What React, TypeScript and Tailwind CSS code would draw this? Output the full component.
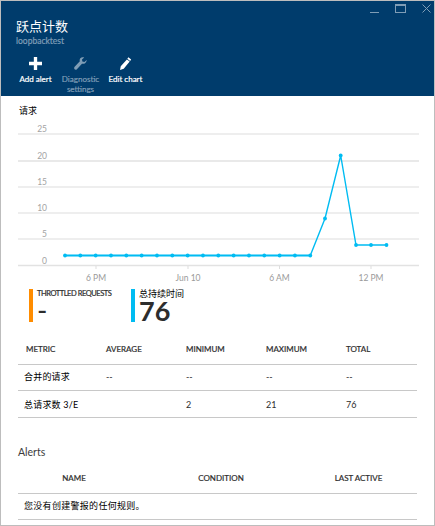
const font = { fontFamily: 'Lato, "Noto Sans CJK SC", sans-serif' };

const pts: [number, number][] = [
  ...Array.from({ length: 17 }, (_, i) => [65 + i * 15.33, 255.5] as [number, number]),
  [325, 218.5],
  [340.7, 155.5],
  [356, 245],
  [371, 245],
  [386.5, 245],
];

function Chart() {
  const grid = [134, 161, 187, 213, 239, 265.5];
  const yl = ['25', '20', '15', '10', '5', '0'];
  const xl: [number, string][] = [[96, '6 PM'], [188, 'Jun 10'], [279.5, '6 AM'], [371, '12 PM']];
  return (
    <svg width="433" height="170" viewBox="0 119 433 170" className="block shrink-0" style={{ marginLeft: -1 }}>
      {grid.map((y, i) => (
        <g key={y}>
          <line x1="18" x2="419" y1={y} y2={y} stroke={i === 1 || i === 5 ? '#e2e2e2' : '#dddddd'} strokeWidth={i === 1 || i === 5 ? 1.6 : 1} />
          <text x="47" y={y - 2} textAnchor="end" fontSize="8.5" fill="#a3a3a3">{yl[i]}</text>
        </g>
      ))}
      {xl.map(([x, t]) => (
        <g key={t}>
          <line x1={x} x2={x} y1="266" y2="269" stroke="#dddddd" />
          <text x={x} y="281" textAnchor="middle" fontSize="8.5" fill="#9a9a9a">{t}</text>
        </g>
      ))}
      <polyline points={pts.slice(0, 17).map((p) => p.join(',')).join(' ')} fill="none" stroke="#a6e6fa" strokeWidth="3" />
      <polyline points={pts.map((p) => p.join(',')).join(' ')} fill="none" stroke="#00bcf2" strokeWidth="1.4" />
      {pts.map(([x, y]) => <circle key={x} cx={x} cy={y} r="1.9" fill="#00bcf2" />)}
    </svg>
  );
}

function Cmd({ icon, label, dim }: { icon: React.ReactNode; label: string; dim?: boolean }) {
  return (
    <div className={`flex flex-col items-center w-[45px] ${dim ? 'text-[#7f9db6]' : 'text-white'}`}>
      <div className="h-[15px] flex items-center justify-center">{icon}</div>
      <div className="mt-[4px] w-[40px] text-[8px] leading-[9.5px] text-center [-webkit-text-stroke:0.2px]">{label}</div>
    </div>
  );
}

export default function App() {
  return (
    <div style={font} className="w-[435px] h-[526px] bg-white border border-[#bdbdbd] overflow-hidden flex flex-col">
      <header className="h-[95px] bg-[#003c6c] relative pl-[15px] pt-[15px] shrink-0">
        <div className="text-[13px] leading-[20px] text-white">跃点计数</div>
        <div className="text-[8.5px] leading-[10px] text-[#7f9db6] [-webkit-text-stroke:0.2px]">loopbacktest</div>
        <div className="flex mt-[10px] -ml-[3px]">
          <Cmd label="Add alert" icon={
            <svg width="13" height="13" viewBox="0 0 14 14"><path d="M5.2 0h3.6v5.2H14v3.6H8.8V14H5.2V8.8H0V5.2h5.2z" fill="#fff" /></svg>
          } />
          <Cmd dim label="Diagnostic settings" icon={
            <svg width="13" height="13" viewBox="0 0 14 14"><path d="M13.6 3.2 11.2 5.4 9 4.9 8.6 2.8 11 .6C9.4-.1 7.7.3 6.8 1.4 6 2.4 5.9 3.6 6.3 4.7L.7 10.6c-.8.9-.7 1.9-.1 2.6.7.7 1.8.6 2.5-.1l5.5-5.9c1.2.4 2.5.2 3.6-.7 1.1-1 1.6-2.5 1.4-3.3z" fill="#7f9db6" /></svg>
          } />
          <Cmd label="Edit chart" icon={
            <svg width="13" height="13" viewBox="0 0 13 14"><path d="M9.6.4 12.6 2.6 11.5 4.2 8.5 2zM8 2.7 11 4.9 4.6 12.6 0.6 14 1.4 10z" fill="#fff" /></svg>
          } />
        </div>
        <div className="absolute right-[3px] top-[3px] flex items-start gap-[16px]">
          <div className="mt-[8px] w-[9px] h-px bg-[#7f9db6]" />
          <div className="w-[11px] h-[9px] border border-[#7f9db6] border-t-[2px]" />
          <svg width="9" height="9" viewBox="0 0 9 9"><path d="M.5.5l8 8M8.5.5l-8 8" stroke="#7f9db6" fill="none" /></svg>
        </div>
      </header>

      <main className="flex-1 flex flex-col">
        <div className="pl-[18px] pt-[7px] text-[9px] leading-[16px] text-black">请求</div>
        <Chart />
        <div className="flex pl-[28px] h-[33px] shrink-0">
          <div className="w-[102px] flex">
            <div className="w-[4px] h-[33px] bg-[#ff8c00]" />
            <div className="pl-[4px] text-[#2d2d2d]">
              <div className="text-[7.5px] leading-[10px] tracking-[-0.45px] whitespace-nowrap [-webkit-text-stroke:0.2px]">THROTTLED REQUESTS</div>
              <div className="text-[28px] leading-[22px] font-normal">-</div>
            </div>
          </div>
          <div className="flex">
            <div className="w-[4px] h-[33px] bg-[#00bcf2]" />
            <div className="pl-[4px] text-[#2d2d2d]">
              <div className="text-[9px] leading-[10px] text-black">总持续时间</div>
              <div className="text-[27px] leading-[24px] font-bold">76</div>
            </div>
          </div>
        </div>

        <section className="mx-[17px] mt-[17px] text-[9px] text-[#2d2d2d] shrink-0">
          <div className="grid grid-cols-[80px_80px_80px_80px_1fr] h-[26px] pb-[5px] items-center border-b border-[#c8c8c8] text-[8px] pl-[8px] [-webkit-text-stroke:0.2px]">
            <div>METRIC</div><div>AVERAGE</div><div>MINIMUM</div><div>MAXIMUM</div><div>TOTAL</div>
          </div>
          <div className="grid grid-cols-[80px_80px_80px_80px_1fr] h-[26px] pb-[1px] items-center border-b border-[#c8c8c8] pl-[6px]">
            <div className="text-black tracking-[0.2px]">合并的请求</div><div className="pl-[2px]">--</div><div className="pl-[2px]">--</div><div className="pl-[2px]">--</div><div className="pl-[2px]">--</div>
          </div>
          <div className="grid grid-cols-[80px_80px_80px_80px_1fr] h-[27px] pt-[2px] items-center border-b border-[#c8c8c8] pl-[6px]">
            <div className="text-black tracking-[0.2px]">总请求数 3/E</div><div /><div className="pl-[2px]">2</div><div className="pl-[2px]">21</div><div className="pl-[2px]">76</div>
          </div>
        </section>

        <h2 className="ml-[17px] mt-[26px] text-[10.5px] leading-[16px] text-[#3c3c3c] font-normal">Alerts</h2>
        <section className="mx-[17px] mt-[5px] text-[9px] text-[#2d2d2d] shrink-0">
          <div className="grid grid-cols-[112px_182px_1fr] h-[29px] pb-[2px] items-center border-b border-[#c8c8c8] text-[8px] text-center [-webkit-text-stroke:0.2px]">
            <div>NAME</div><div>CONDITION</div><div className="pr-[12px]">LAST ACTIVE</div>
          </div>
          <div className="h-[26px] pb-[2px] flex items-center border-b border-[#c8c8c8] pl-[6px] text-black tracking-[0.3px]">您没有创建警报的任何规则。</div>
        </section>
      </main>
    </div>
  );
}
